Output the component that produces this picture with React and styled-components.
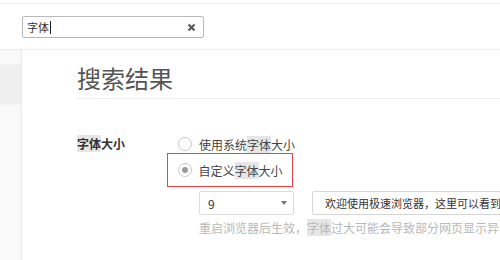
import React from 'react';
import styled, { createGlobalStyle, css } from 'styled-components';

const GlobalStyle = createGlobalStyle`
  html, body {
    margin: 0;
    padding: 0;
    background: #fff;
  }
  body {
    width: 500px;
    height: 260px;
    overflow: hidden;
    font-family: "Noto Sans CJK SC", "Noto Sans", sans-serif;
    color: #333;
  }
`;

function Radio({ checked }) {
  return <RadioCircle checked={checked}>{checked && <RadioDot />}</RadioCircle>;
}

function App() {
  return (
    <Page>
      <GlobalStyle />
      <TopBar>
        <SearchBox>
          <SearchText>
            字体<Caret />
          </SearchText>
          <ClearIcon width='9' height='9' viewBox='0 0 9 9'>
            <path d='M1.5 1.5 L7.5 7.5 M7.5 1.5 L1.5 7.5' stroke='#555' strokeWidth='2' />
          </ClearIcon>
        </SearchBox>
      </TopBar>
      <Body>
        <Sidebar>
          <NavItem height={14} />
          <NavItem height={39} active />
          <NavItem grow />
        </Sidebar>
        <Main>
          <Title>搜索结果</Title>
          <SettingRow>
            <SettingLabel>
              <Mark>字体</Mark>大小
            </SettingLabel>
            <Options>
              <Option>
                <Radio />
                <span>
                  使用系统<Mark>字体</Mark>大小
                </span>
              </Option>
              <Option marked>
                <Radio checked />
                <span>
                  自定义<Mark>字体</Mark>大小
                </span>
              </Option>
              <Controls>
                <Select>
                  <span>9</span>
                  <SelectArrow />
                </Select>
                <PreviewInput>欢迎使用极速浏览器，这里可以看到字体大小的效果</PreviewInput>
              </Controls>
              <Hint>
                重启浏览器后生效，<Mark>字体</Mark>过大可能会导致部分网页显示异常
              </Hint>
            </Options>
          </SettingRow>
        </Main>
      </Body>
    </Page>
  );
}

export default App;

const Page = styled.div`
  display: flex;
  flex-direction: column;
  width: 500px;
  height: 260px;
  overflow: hidden;
`;

const TopBar = styled.div`
  height: 50px;
  flex-shrink: 0;
  padding: 16px 0 0 22px;
  box-sizing: border-box;
  border-bottom: 1px solid #ececec;
  background: linear-gradient(#fff 3px, #eeeeee 3px, #eeeeee 4px, #fff 4px);
`;

const SearchBox = styled.div`
  display: flex;
  align-items: center;
  justify-content: space-between;
  width: 182px;
  height: 22px;
  box-sizing: border-box;
  padding: 0 7px 0 4px;
  border: 1px solid #b9b9b9;
  border-radius: 2px;
  background: #fff;
`;

const SearchText = styled.span`
  display: flex;
  align-items: center;
  font-size: 11px;
  color: #333;
`;

const Caret = styled.span`
  display: inline-block;
  width: 0;
  height: 13px;
  border-left: 1px solid #222;
  margin-left: 1px;
`;

const ClearIcon = styled.svg`
  display: block;
`;

const Body = styled.div`
  display: flex;
  flex: 1;
`;

const Sidebar = styled.div`
  display: flex;
  flex-direction: column;
  width: 21px;
  flex-shrink: 0;
  border-right: 1px solid #ebebeb;
`;

const NavItem = styled.div`
  height: ${(p) => (p.height ? `${p.height}px` : 'auto')};
  background: #f9f9f9;
  border-bottom: 1px solid #f3f3f3;
  ${(p) =>
    p.active &&
    css`
      background: #efefef;
    `}
  ${(p) =>
    p.grow &&
    css`
      flex: 1;
      border-bottom: none;
    `}
`;

const Main = styled.div`
  flex: 1;
  padding: 12px 0 0 55px;
`;

const Title = styled.h1`
  margin: 0;
  padding-bottom: 5px;
  border-bottom: 1px solid #eeeeee;
  font-size: 24px;
  line-height: 31px;
  font-weight: 400;
  color: #555;
`;

const SettingRow = styled.div`
  display: flex;
  margin-top: 32px;
`;

const SettingLabel = styled.div`
  width: 90px;
  flex-shrink: 0;
  font-size: 12px;
  line-height: 26px;
  font-weight: 700;
  color: #333;
`;

const Mark = styled.span`
  background: #e6e6e6;
`;

const Options = styled.div`
  display: flex;
  flex-direction: column;
  font-size: 12px;
  color: #444;
`;

const Option = styled.div`
  display: flex;
  align-items: center;
  gap: 7px;
  height: 26px;
  padding-left: 11px;
  box-sizing: border-box;
  ${(p) =>
    p.marked &&
    css`
      width: 126px;
      height: 34px;
      margin: -4px 0;
      padding-left: 9.5px;
      border: 1.5px solid #e5444f;
    `}
`;

const RadioCircle = styled.span`
  display: flex;
  align-items: center;
  justify-content: center;
  width: 14px;
  height: 14px;
  box-sizing: border-box;
  border: 1px solid #c9c9c9;
  border-radius: 50%;
  background: #fff;
`;

const RadioDot = styled.span`
  width: 6px;
  height: 6px;
  border-radius: 50%;
  background: #9a9a9a;
`;

const Controls = styled.div`
  display: flex;
  gap: 18px;
  margin-top: 8px;
  padding-left: 32px;
`;

const Select = styled.div`
  display: flex;
  align-items: center;
  justify-content: space-between;
  width: 95px;
  height: 24px;
  box-sizing: border-box;
  padding: 0 6px 0 8px;
  border: 1px solid #dcdcdc;
  border-radius: 2px;
  font-size: 12px;
  color: #333;
`;

const SelectArrow = styled.span`
  width: 0;
  height: 0;
  border-left: 3.5px solid transparent;
  border-right: 3.5px solid transparent;
  border-top: 4px solid #777;
`;

const PreviewInput = styled.div`
  display: flex;
  align-items: center;
  width: 240px;
  height: 24px;
  flex-shrink: 0;
  box-sizing: border-box;
  padding-left: 12px;
  border: 1px solid #d6d6d6;
  border-radius: 2px;
  font-size: 11px;
  color: #333;
  white-space: nowrap;
  overflow: hidden;
`;

const Hint = styled.div`
  margin-top: 4px;
  padding-left: 32px;
  font-size: 12px;
  line-height: 18px;
  color: #b8b8b8;
  white-space: nowrap;
`;
